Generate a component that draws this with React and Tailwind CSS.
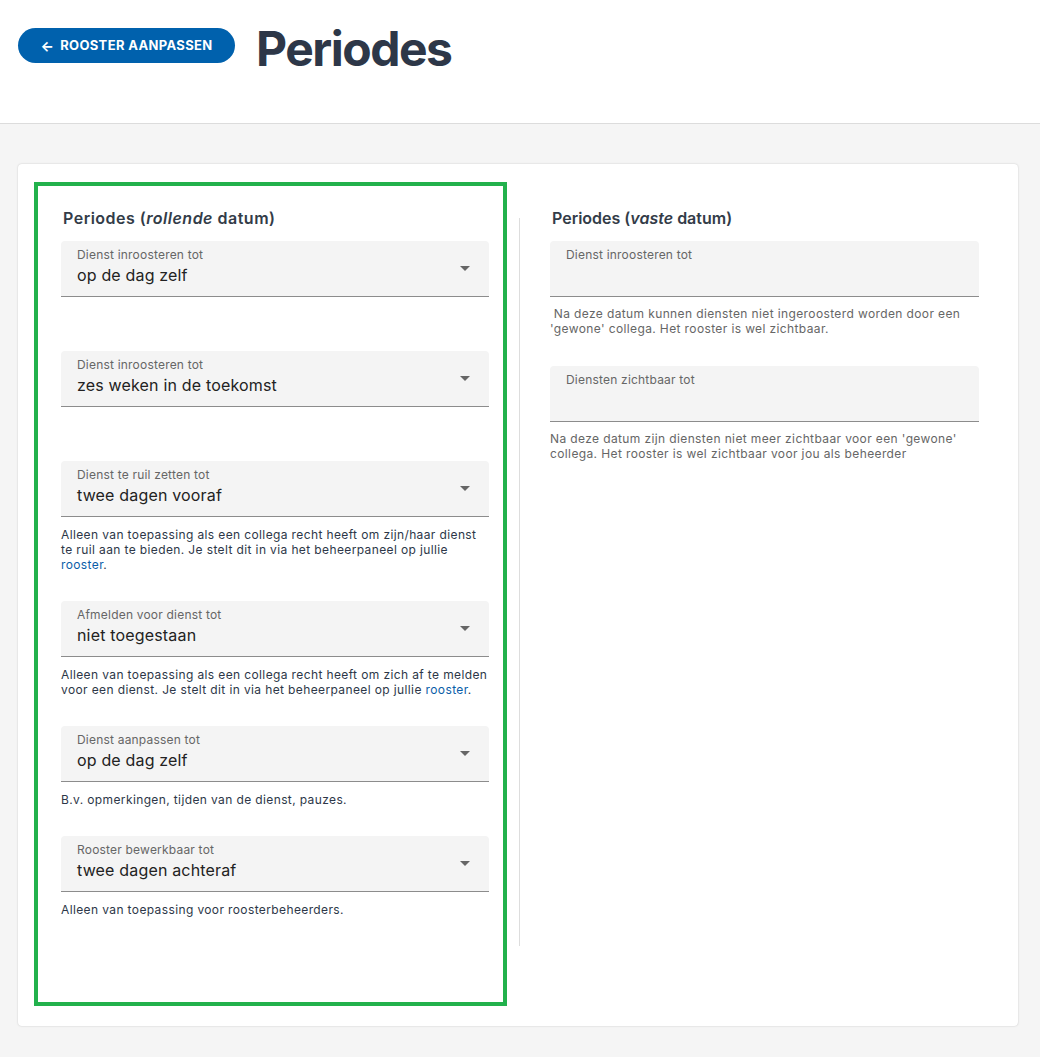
const rolling = [
  { label: 'Dienst inroosteren tot', value: 'op de dag zelf', help: null },
  { label: 'Dienst inroosteren tot', value: 'zes weken in de toekomst', help: null },
  {
    label: 'Dienst te ruil zetten tot',
    value: 'twee dagen vooraf',
    help: (
      <>
        Alleen van toepassing als een collega recht heeft om zijn/haar dienst te ruil aan te bieden. Je stelt dit in via het beheerpaneel op jullie{' '}
        <a className="text-[#0a5ea8]">rooster</a>.
      </>
    ),
  },
  {
    label: 'Afmelden voor dienst tot',
    value: 'niet toegestaan',
    help: (
      <>
        Alleen van toepassing als een collega recht heeft om zich af te melden voor een dienst. Je stelt dit in via het beheerpaneel op jullie{' '}
        <a className="text-[#0a5ea8]">rooster</a>.
      </>
    ),
  },
  { label: 'Dienst aanpassen tot', value: 'op de dag zelf', help: 'B.v. opmerkingen, tijden van de dienst, pauzes.' },
  { label: 'Rooster bewerkbaar tot', value: 'twee dagen achteraf', help: 'Alleen van toepassing voor roosterbeheerders.' },
];

const fixed = [
  { label: 'Dienst inroosteren tot', help: "\u00a0Na deze datum kunnen diensten niet ingeroosterd worden door een 'gewone' collega. Het rooster is wel zichtbaar." },
  { label: 'Diensten zichtbaar tot', help: "Na deze datum zijn diensten niet meer zichtbaar voor een 'gewone' collega. Het rooster is wel zichtbaar voor jou als beheerder" },
];

function Field({ label, value, select }) {
  return (
    <div className="relative h-14 rounded-t-[4px] border-b border-[#8c8c8c] bg-[#f4f4f4] px-4 pt-[6px]">
      <div className="text-[12px] leading-4 tracking-[0.2px] text-[#666]">{label}</div>
      {value && <div className="mt-[2px] text-[16px] leading-5 tracking-[0.17px] text-[#222]">{value}</div>}
      {select && (
        <svg className="absolute right-[19px] top-[25px]" width="10" height="5" viewBox="0 0 10 5">
          <path d="M0 0h10L5 5z" fill="#666" />
        </svg>
      )}
    </div>
  );
}

export default function App() {
  return (
    <div className="min-h-[1057px] bg-[#f5f5f5] font-['Inter',sans-serif]">
      <div className="flex h-[124px] items-start gap-[21px] border-b border-[#dcdcdc] bg-white px-[18px] pt-[28px]">
        <button className="flex h-[35px] w-[217px] items-center justify-center gap-[6px] rounded-full bg-[#0061ad] text-[13px] font-bold tracking-[0.35px] text-white">
          <span className="text-[14px] leading-none">←</span> ROOSTER AANPASSEN
        </button>
        <h1 className="-mt-[8px] text-[48px] font-bold leading-[58px] tracking-[-1.5px] text-[#2d3748]">Periodes</h1>
      </div>

      <div className="ml-[18px] mt-[40px] flex h-[862px] w-[1000px] rounded-[4px] bg-white pl-4 pt-[18px] shadow-[0_0_2px_rgba(0,0,0,0.2)]">
        <div className="h-[824px] w-[473px] border-4 border-[#22b14c] pl-[23px] pr-[14px] pt-[22px]">
          <h2 className="mb-[13px] pl-[2px] text-[16px] font-semibold leading-5 tracking-[0.5px] text-[#333c48]">
            Periodes (<i>rollende</i> datum)
          </h2>
          {rolling.map((f, i) => (
            <div key={i} className="mb-[29px]">
              <Field label={f.label} value={f.value} select />
              <p className="mt-[10px] min-h-[15px] text-[12px] leading-[15px] tracking-[0.38px] text-[#2d3748]">{f.help}</p>
            </div>
          ))}
        </div>

        <div className="ml-3 mt-[36px] h-[728px] w-px bg-[#dddddd]" />

        <div className="ml-[30px] w-[429px] pt-[26px]">
          <h2 className="mb-[13px] pl-[2px] text-[16px] font-semibold leading-5 text-[#333c48]">
            Periodes (<i>vaste</i> datum)
          </h2>
          {fixed.map((f, i) => (
            <div key={i} className="mb-[30px]">
              <Field label={f.label} />
              <p className="mt-[9px] text-[12px] leading-[15px] tracking-[0.38px] text-[#666]">{f.help}</p>
            </div>
          ))}
        </div>
      </div>
    </div>
  );
}
